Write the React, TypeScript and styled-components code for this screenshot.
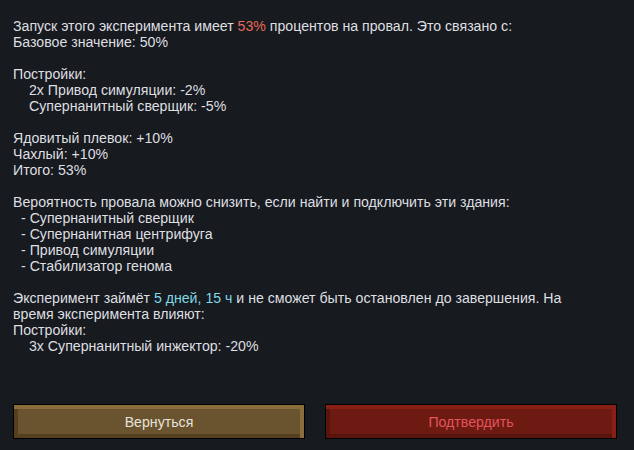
import React from 'react';
import styled, {createGlobalStyle} from 'styled-components';

const GlobalStyle = createGlobalStyle`
  html, body {
    margin: 0;
    padding: 0;
    background: #171a1f;
  }
`;

const Page = styled.div`
  width: 634px;
  height: 450px;
  box-sizing: border-box;
  padding: 18px 17px 11px 13px;
  display: flex;
  flex-direction: column;
  background: #171a1f;
  color: #dedfe0;
  font-family: 'Liberation Sans', Arial, sans-serif;
  font-size: 14.15px;
  line-height: 16px;
`;

const Body = styled.div`
  flex: 1;
`;

const Line = styled.div<{indent?: number}>`
  height: 16px;
  white-space: nowrap;
  padding-left: ${(p) => p.indent ?? 0}px;
`;

const Gap = styled.div`
  height: 16px;
`;

const Hl = styled.span<{tone: 'red' | 'cyan'}>`
  color: ${(p) => (p.tone === 'red' ? '#e86a5c' : '#7fd8e6')};
`;

const Actions = styled.div`
  display: grid;
  grid-template-columns: 1fr 1fr;
  gap: 20px;
`;

const variants = {
  back: {
    fill: '#6a532f',
    light: '#8a6d3d',
    dark: '#54401f',
    text: '#e6e2da',
  },
  confirm: {
    fill: '#6c1a12',
    light: '#8a2015',
    dark: '#58140d',
    text: '#e4545c',
  },
};

const Button = styled.button<{variant: keyof typeof variants}>`
  height: 35px;
  box-sizing: border-box;
  border: 1px solid #000;
  padding: 0;
  background: ${(p) => variants[p.variant].fill};
  box-shadow:
    inset 0 4px 0 ${(p) => variants[p.variant].light},
    inset -4px 0 0 ${(p) => variants[p.variant].light},
    inset 0 -4px 0 ${(p) => variants[p.variant].dark},
    inset 4px 0 0 ${(p) => variants[p.variant].dark};
  color: ${(p) => variants[p.variant].text};
  font-family: 'Liberation Sans', Arial, sans-serif;
  font-size: 14.15px;
  cursor: pointer;
`;

export default function App() {
  return (
    <>
      <GlobalStyle />
      <Page>
        <Body>
          <Line>
            Запуск этого эксперимента имеет <Hl tone="red">53%</Hl> процентов на провал. Это связано с:
          </Line>
          <Line>Базовое значение: 50%</Line>
          <Gap />
          <Line>Постройки:</Line>
          <Line indent={16}>2x Привод симуляции: -2%</Line>
          <Line indent={16}>Супернанитный сверщик: -5%</Line>
          <Gap />
          <Line>Ядовитый плевок: +10%</Line>
          <Line>Чахлый: +10%</Line>
          <Line>Итого: 53%</Line>
          <Gap />
          <Line>Вероятность провала можно снизить, если найти и подключить эти здания:</Line>
          <Line indent={8}>- Супернанитный сверщик</Line>
          <Line indent={8}>- Супернанитная центрифуга</Line>
          <Line indent={8}>- Привод симуляции</Line>
          <Line indent={8}>- Стабилизатор генома</Line>
          <Gap />
          <Line>
            Эксперимент займёт <Hl tone="cyan">5 дней, 15 ч</Hl> и не сможет быть остановлен до завершения. На
          </Line>
          <Line>время эксперимента влияют:</Line>
          <Line>Постройки:</Line>
          <Line indent={16}>3x Супернанитный инжектор: -20%</Line>
        </Body>
        <Actions>
          <Button variant="back">Вернуться</Button>
          <Button variant="confirm">Подтвердить</Button>
        </Actions>
      </Page>
    </>
  );
}
